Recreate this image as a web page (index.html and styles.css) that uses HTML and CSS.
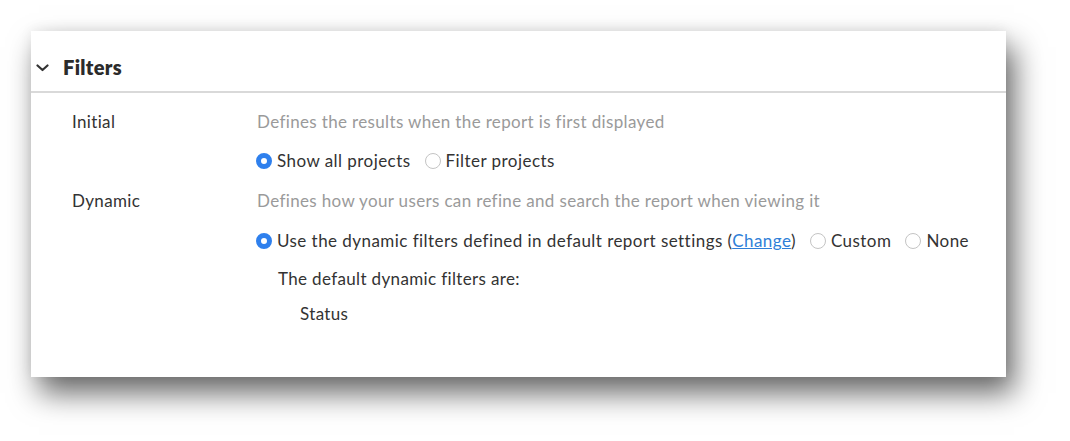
FILE: index.html
```html
<!DOCTYPE html>
<html>
<head>
<meta charset="utf-8">
<link rel="stylesheet" href="styles.css">
</head>
<body>
<div class="card">
  <div class="header">
    <svg class="chev" width="13" height="8" viewBox="0 0 13 8"><path d="M1.5 1.5 L6.5 6 L11.5 1.5" fill="none" stroke="#333" stroke-width="2.2" stroke-linecap="round" stroke-linejoin="round"/></svg>
    <span class="title">Filters</span>
  </div>
  <div class="body">
    <div class="row">
      <div class="label">Initial</div>
      <div class="content">
        <div class="desc">Defines the results when the report is first displayed</div>
        <div class="options">
          <label class="opt"><span class="radio on"></span><span>Show all projects</span></label>
          <label class="opt"><span class="radio"></span><span>Filter projects</span></label>
        </div>
      </div>
    </div>
    <div class="row">
      <div class="label">Dynamic</div>
      <div class="content">
        <div class="desc">Defines how your users can refine and search the report when viewing it</div>
        <div class="options second">
          <label class="opt"><span class="radio on"></span><span>Use the dynamic filters defined in default report settings (<a class="link" href="#">Change</a>)</span></label>
          <label class="opt"><span class="radio"></span><span>Custom</span></label>
          <label class="opt"><span class="radio"></span><span>None</span></label>
        </div>
        <div class="defaults">The default dynamic filters are:</div>
        <div class="filter-item">Status</div>
      </div>
    </div>
  </div>
</div>
</body>
</html>
```
FILE: styles.css
```css
html, body {
  margin: 0;
  padding: 0;
  background: #ffffff;
}
html {
  min-height: 441px;
}
body {
  min-height: 441px;
  box-sizing: border-box;
  font-family: Lato, "Open Sans", sans-serif;
  color: #333333;
  padding: 31px 0 0 31px;
}
.card {
  width: 975px;
  height: 346px;
  box-sizing: border-box;
  background: #ffffff;
  box-shadow: 8px 16px 28px rgba(0, 0, 0, 0.6), 0 -2px 12px rgba(0, 0, 0, 0.06);
}
.header {
  height: 62px;
  box-sizing: border-box;
  padding: 12px 0 0 5px;
  display: flex;
  align-items: center;
  border-bottom: 2px solid #d9d9d9;
}
.chev {
  display: block;
  margin-top: 1px;
}
.title {
  margin-left: 14px;
  font-size: 20px;
  font-weight: 800;
  color: #2b2b2b;
  letter-spacing: 0.3px;
}
.body {
  padding: 17px 0 0 41px;
  font-size: 17px;
  line-height: 24px;
  letter-spacing: 0.35px;
}
.row {
  display: grid;
  grid-template-columns: 185px 1fr;
  margin-bottom: 16px;
}
.label {
  color: #333333;
}
.content {
  display: flex;
  flex-direction: column;
}
.desc {
  color: #9a9a9a;
}
.options {
  display: flex;
  align-items: center;
  gap: 14px;
  margin-top: 15px;
  margin-left: -1px;
  letter-spacing: 0.45px;
}
.options.second {
  margin-top: 16px;
}
.opt {
  display: flex;
  align-items: center;
  gap: 5px;
  color: #333333;
}
.radio {
  width: 16px;
  height: 16px;
  box-sizing: border-box;
  border-radius: 50%;
  border: 1px solid #c4c4c4;
  background: #fff;
  flex: none;
}
.radio.on {
  border: 5.5px solid #2f80ed;
  background: #ffffff;
}
.link {
  color: #2f7fd8;
  text-decoration: underline;
}
.defaults {
  margin-top: 14px;
  margin-left: 21px;
}
.filter-item {
  margin-top: 11px;
  margin-left: 43px;
}
```
